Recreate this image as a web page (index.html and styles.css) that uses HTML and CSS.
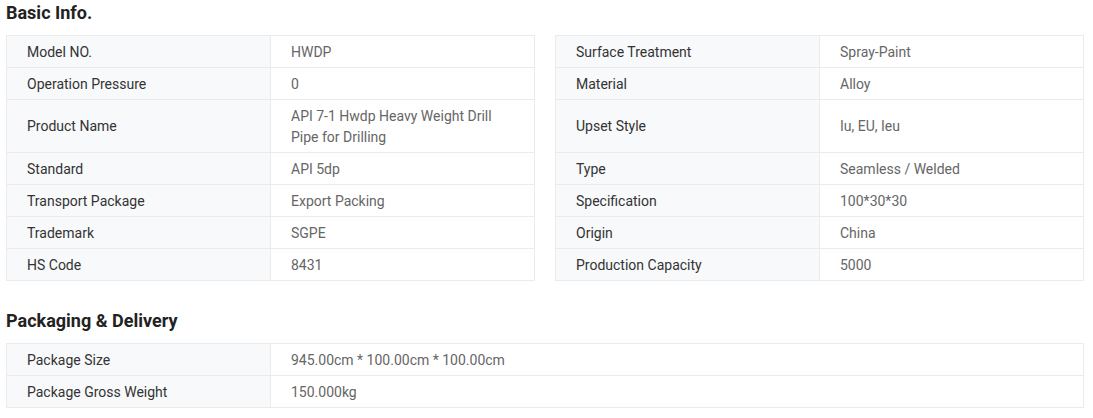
FILE: index.html
```html
<!DOCTYPE html>
<html>
<head>
<meta charset="utf-8">
<link rel="stylesheet" href="styles.css">
</head>
<body>
<div class="wrap">
  <h2 class="title">Basic Info.</h2>
  <div class="cols">
    <table class="spec">
      <tr><th>Model NO.</th><td>HWDP</td></tr>
      <tr><th>Operation Pressure</th><td>0</td></tr>
      <tr class="tall"><th>Product Name</th><td class="multi">API 7-1 Hwdp Heavy Weight Drill Pipe for Drilling</td></tr>
      <tr><th>Standard</th><td>API 5dp</td></tr>
      <tr><th>Transport Package</th><td>Export Packing</td></tr>
      <tr><th>Trademark</th><td>SGPE</td></tr>
      <tr><th>HS Code</th><td>8431</td></tr>
    </table>
    <table class="spec">
      <tr><th>Surface Treatment</th><td>Spray-Paint</td></tr>
      <tr><th>Material</th><td>Alloy</td></tr>
      <tr class="tall"><th>Upset Style</th><td>Iu, EU, Ieu</td></tr>
      <tr><th>Type</th><td>Seamless / Welded</td></tr>
      <tr><th>Specification</th><td>100*30*30</td></tr>
      <tr><th>Origin</th><td>China</td></tr>
      <tr><th>Production Capacity</th><td>5000</td></tr>
    </table>
  </div>
  <h2 class="title second">Packaging &amp; Delivery</h2>
  <table class="spec full">
    <tr><th>Package Size</th><td>945.00cm * 100.00cm * 100.00cm</td></tr>
    <tr><th>Package Gross Weight</th><td>150.000kg</td></tr>
  </table>
</div>
</body>
</html>
```

FILE: styles.css
```css
html, body {
  margin: 0;
  padding: 0;
  background: #fff;
}
body {
  font-family: Roboto, "Liberation Sans", Arial, sans-serif;
  font-size: 14px;
  color: #333;
}
.wrap {
  width: 1078px;
  padding: 0 0 0 6px;
}
.title {
  margin: 1px 0 10px;
  font-size: 18px;
  line-height: 24px;
  font-weight: 700;
  color: #222;
}
.title.second {
  margin-top: 28px;
  margin-bottom: 10px;
}
.cols {
  display: flex;
  gap: 20px;
}
.spec {
  width: 529px;
  border-collapse: collapse;
  table-layout: fixed;
}
.spec.full {
  width: 1078px;
}
.spec th,
.spec td {
  border: 1px solid #ebebeb;
  padding: 6px 20px 4px;
  line-height: 21px;
  text-align: left;
  vertical-align: middle;
  font-weight: 400;
}
.spec th {
  width: 223px;
  background: #f8f9fb;
  color: #333;
}
.spec td {
  color: #666;
}
.spec tr.tall th,
.spec tr.tall td {
  height: 42px;
  padding-top: 5px;
  padding-bottom: 5px;
}
.spec tr.tall td.multi {
  padding-top: 6px;
  padding-bottom: 4px;
}
```
